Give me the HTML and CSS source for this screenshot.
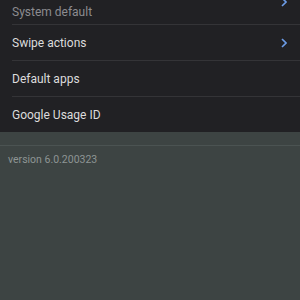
FILE: index.html
```html
<!DOCTYPE html>
<html lang="en">
<head>
    <meta charset="UTF-8">
    <title>Settings</title>
    <link rel="stylesheet" href="styles.css">
</head>
<body>
    <div class="list">
        <div class="row row-first">
            <div class="label sub">System default</div>
            <svg class="chevron" width="6" height="10" viewBox="0 0 6 10"><path d="M1 1 L5 5 L1 9" fill="none" stroke="#6c9ce6" stroke-width="1.6"/></svg>
        </div>
        <div class="row">
            <div class="label">Swipe actions</div>
            <svg class="chevron" width="6" height="10" viewBox="0 0 6 10"><path d="M1 1 L5 5 L1 9" fill="none" stroke="#6c9ce6" stroke-width="1.6"/></svg>
        </div>
        <div class="row">
            <div class="label">Default apps</div>
        </div>
        <div class="row row-last">
            <div class="label">Google Usage ID</div>
        </div>
    </div>
    <div class="footer">
        <div class="version">version 6.0.200323</div>
    </div>
</body>
</html>
```

FILE: styles.css
```css
body {
    margin: 0;
    padding: 0;
    background: #3d4443;
    font-family: Roboto, "Liberation Sans", Arial, sans-serif;
    height: 300px;
    overflow: hidden;
}

.list {
    background: #212124;
    padding-left: 12px;
}

.row {
    display: flex;
    align-items: center;
    justify-content: space-between;
    height: 35px;
    padding-right: 13px;
    border-bottom: 1px solid #343437;
}

.row-first {
    height: 24px;
    align-items: flex-start;
}

.row-first .label {
    margin-top: 5px;
}

.row-first .chevron {
    margin-top: -3px;
}

.row-last {
    border-bottom: none;
}

.label {
    font-size: 12px;
    color: #dcdcdc;
}

.label.sub {
    color: #8c8c90;
}

.footer {
    border-top: 13px solid #3d4443;
}

.version {
    border-top: 1px solid #4b5352;
    padding: 7px 8px;
    font-size: 10.5px;
    color: #8e9594;
}
```
